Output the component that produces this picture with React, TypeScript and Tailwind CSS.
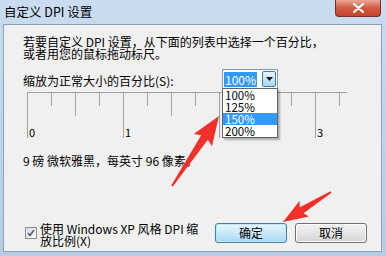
import React from 'react';

type Pt = { x: number; y: number };

// tapered annotation arrow, drawn from tail to tip
function arrowPoints(tail: Pt, tip: Pt, headLen: number, headW: number, tailW: number, neckW: number) {
  const dx = tip.x - tail.x;
  const dy = tip.y - tail.y;
  const len = Math.hypot(dx, dy);
  const ux = dx / len;
  const uy = dy / len;
  const px = -uy;
  const py = ux;
  const nx = tip.x - ux * headLen;
  const ny = tip.y - uy * headLen;
  const pts: [number, number][] = [
    [tail.x + (px * tailW) / 2, tail.y + (py * tailW) / 2],
    [nx + (px * neckW) / 2, ny + (py * neckW) / 2],
    [nx - ux * 3 + (px * headW) / 2, ny - uy * 3 + (py * headW) / 2],
    [tip.x, tip.y],
    [nx - ux * 3 - (px * headW) / 2, ny - uy * 3 - (py * headW) / 2],
    [nx - (px * neckW) / 2, ny - (py * neckW) / 2],
    [tail.x - (px * tailW) / 2, tail.y - (py * tailW) / 2],
  ];
  return pts.map((p) => p.join(',')).join(' ');
}

const TICKS = Array.from({ length: 14 }, (_, i) => i);
const OPTIONS = ['100%', '125%', '150%', '200%'];

function Ruler() {
  return (
    <svg className="ml-[4px] block" width="322" height="47">
      <line x1="0" y1="0.5" x2="320" y2="0.5" stroke="#a0a0a0" />
      {TICKS.map((i) => {
        const x = i * 24 + 0.5;
        const h = i % 4 === 0 ? 46 : i % 2 === 0 ? 24 : 14;
        return <line key={i} x1={x} y1="0" x2={x} y2={h} stroke="#a0a0a0" />;
      })}
      <text x="2" y="45" fontSize="11" fill="#000">0</text>
      <text x="98" y="45" fontSize="11" fill="#000">1</text>
      <text x="290" y="45" fontSize="11" fill="#000">3</text>
    </svg>
  );
}

export default function App() {
  return (
    <div className="relative h-[256px] w-[386px] overflow-hidden bg-gradient-to-b from-[#c9dcf0] via-[#bfd4ec] to-[#b6cce6] font-['Noto_Sans_CJK_SC',sans-serif] text-black">
      <div className="flex h-[24px] items-center pl-[4px] text-[12.5px]">自定义 DPI 设置</div>

      <button
        type="button"
        className="absolute right-[5px] top-0 flex h-[17px] w-[46px] items-center justify-center rounded-b-[4px] border border-t-0 border-[#7a2f24] bg-gradient-to-b from-[#e9a795] via-[#d25a43] to-[#c8432c]"
      >
        <svg width="11" height="10" viewBox="0 0 11 10">
          <path d="M1 1 L10 9 M10 1 L1 9" stroke="#fff" strokeWidth="2.2" strokeLinecap="round" />
        </svg>
      </button>

      <div className="ml-[3px] mr-[4px] h-[228px] border border-[#8da0b8] bg-[#f0f0f0] pl-[19px] pt-[11px] text-[12px]">
        <p className="leading-[12px]">
          若要自定义 DPI 设置，从下面的列表中选择一个百分比，
          <br />
          或者用您的鼠标拖动标尺。
        </p>

        <div className="mt-[9px] flex h-[20px] items-center">
          <span className="w-[199px] pt-[3px] leading-[12px]">缩放为正常大小的百分比(S):</span>
          <div className="flex h-[20px] w-[56px] border border-[#7f9db9] bg-white">
            <div className="flex flex-1 items-center pl-[1px]">
              <span className="bg-[#3399ff] px-[1px] leading-[15px] text-white">100%</span>
            </div>
            <div className="m-[1px] flex w-[14px] items-center justify-center rounded-[2px] border border-[#3c7fb1] bg-gradient-to-b from-[#eaf6fd] to-[#a7d4f0]">
              <svg width="7" height="4" viewBox="0 0 7 4">
                <path d="M0 0 H7 L3.5 4 Z" fill="#1b1b1b" />
              </svg>
            </div>
          </div>
        </div>

        <div className="mt-[3px]">
          <Ruler />
        </div>

        <p className="mt-[16px] leading-[12px]">9 磅 微软雅黑，每英寸 96 像素。</p>

        <div className="mt-[56px] flex items-start">
          <div className="ml-[2px] mt-[4px] flex h-[12px] w-[12px] items-center justify-center border border-[#8e8f8f] bg-gradient-to-br from-[#dcdcdc] to-[#fbfbfb]">
            <svg width="8" height="8" viewBox="0 0 8 8">
              <path d="M1 4 L3 6.5 L7 1" stroke="#4b5f8e" strokeWidth="1.6" fill="none" />
            </svg>
          </div>
          <p className="ml-[3px] w-[170px] leading-[12px]">
            使用 Windows XP 风格 DPI 缩
            <br />
            放比例(X)
          </p>
          <button
            type="button"
            className="ml-[5px] h-[20px] w-[72px] rounded-[3px] border border-[#3c7fb1] bg-gradient-to-b from-[#eaf6fd] via-[#c9e8f9] to-[#a7d9f5] text-[12px] leading-[18px] shadow-[inset_0_0_0_1px_#bfe6f9]"
          >
            确定
          </button>
          <button
            type="button"
            className="ml-[8px] h-[20px] w-[72px] rounded-[3px] border border-[#707070] bg-gradient-to-b from-[#f2f2f2] via-[#e6e6e6] to-[#d4d4d4] text-[12px] leading-[18px] shadow-[inset_0_0_0_1px_#fcfcfc]"
          >
            取消
          </button>
        </div>
      </div>

      <ul className="absolute left-[222px] top-[88px] w-[56px] border border-[#646464] bg-white text-[11.5px] shadow-[2px_2px_2px_rgba(0,0,0,0.3)]">
        {OPTIONS.map((o) => (
          <li
            key={o}
            className={
              o === '150%'
                ? 'h-[12px] bg-[#3399ff] pl-[2px] leading-[12px] text-white'
                : 'h-[12px] pl-[2px] leading-[12px]'
            }
          >
            {o}
          </li>
        ))}
      </ul>

      <svg className="pointer-events-none absolute inset-0" width="386" height="256">
        <polygon
          points={arrowPoints({ x: 172, y: 186 }, { x: 219, y: 116 }, 26, 22, 2, 8)}
          fill="#f2302a"
        />
        <polygon
          points={arrowPoints({ x: 331, y: 192 }, { x: 283, y: 222 }, 22, 18, 2, 7)}
          fill="#f2302a"
        />
      </svg>
    </div>
  );
}
